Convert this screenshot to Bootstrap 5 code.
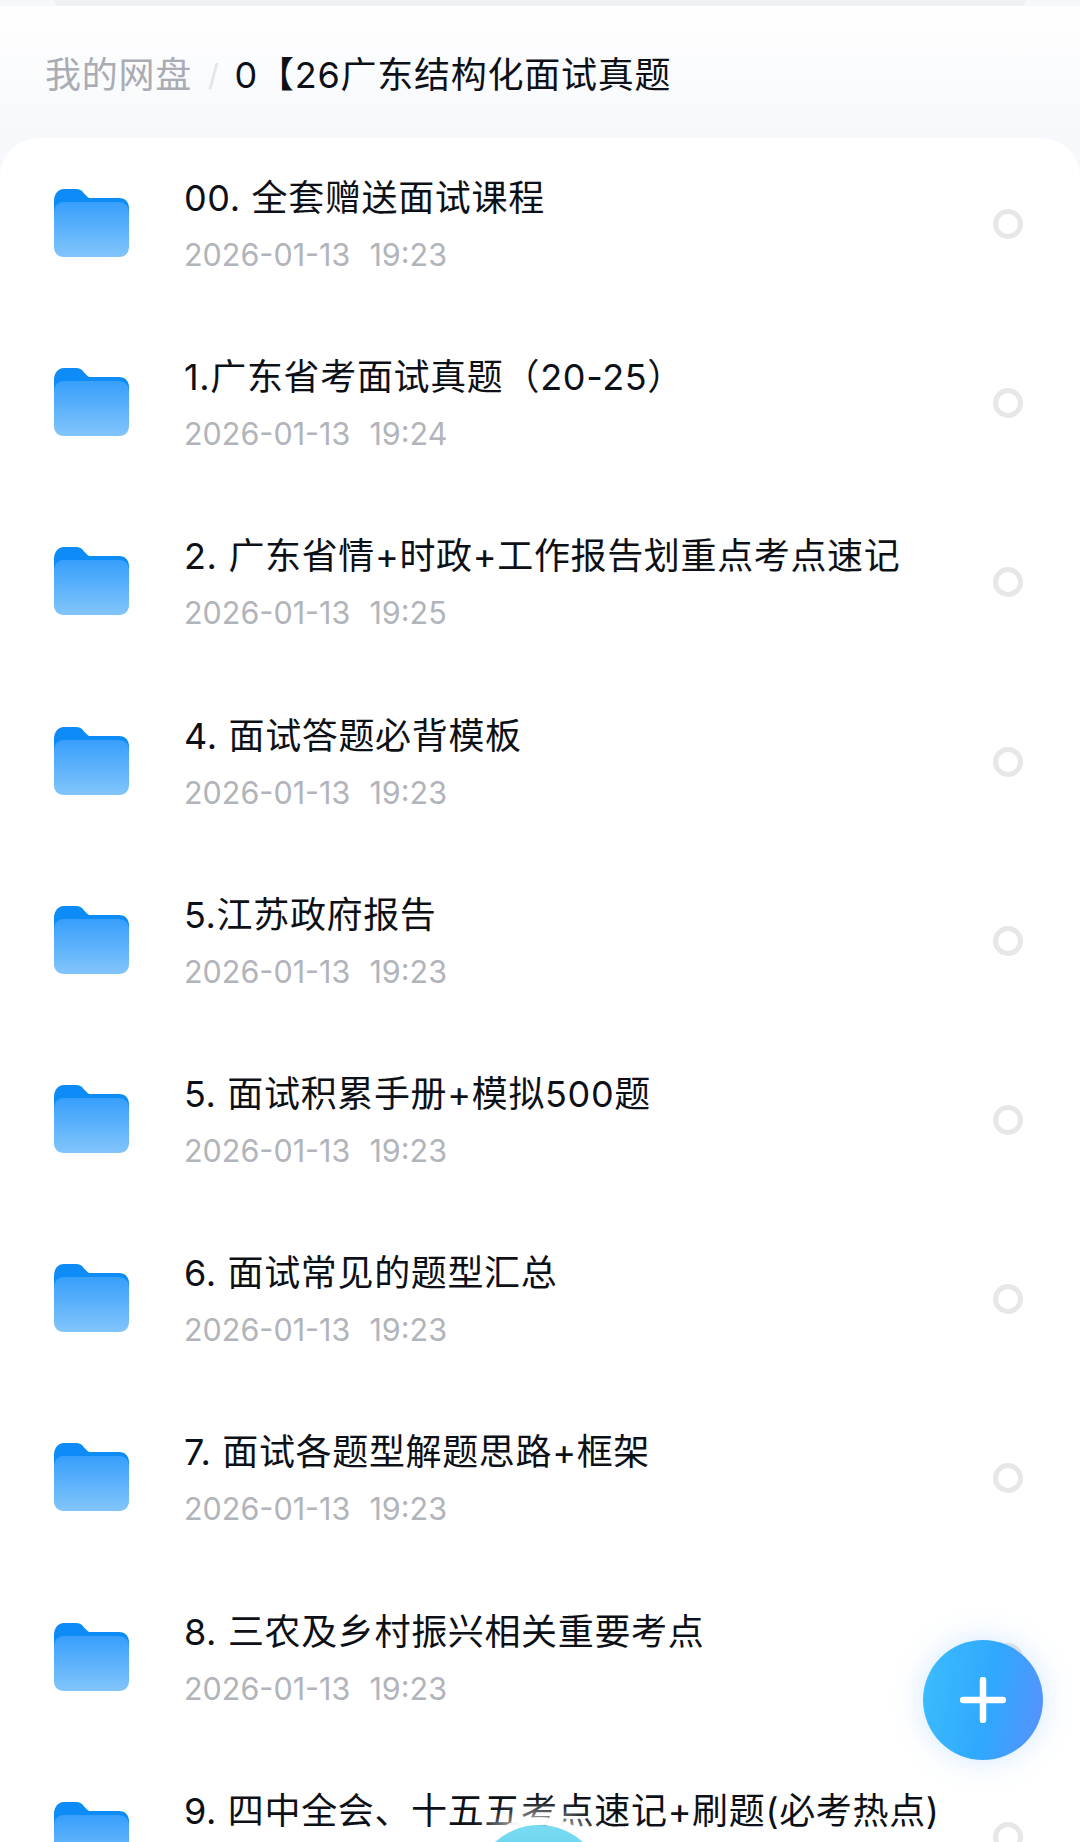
<!DOCTYPE html>
<html lang="zh-CN">
<head>
	<meta charset="UTF-8">
	<meta name="viewport" content="width=device-width, initial-scale=1.0">
	<title>我的网盘</title>
	<link href="https://cdn.jsdelivr.net/npm/bootstrap@5.3.0/dist/css/bootstrap.min.css" rel="stylesheet">
	<style>
        html, body {
            height: 1842px;
            overflow: hidden;
        }
        body {
            position: relative;
            font-family: "Inter", "Noto Sans CJK SC", sans-serif;
            background: #f6f8fb;
        }
        .top-stub {
            height: 6px;
            margin: 0 54px;
            background: #eff1f5;
            border-radius: 0 0 22px 22px;
        }
        .crumb-bar {
            height: 132px;
            padding: 6px 0 0 45px;
            font-size: 36px;
            letter-spacing: .75px;
            background: linear-gradient(#ffffff, #f6f8fb);
        }
        .crumb-root { color: #a9acb3; }
        .crumb-sep { color: #e2e4e9; margin: 0 15px 0 16px; font-size: 30px; }
        .crumb-now { color: #0d1117; }
        .file-panel {
            background: #fff;
            border-radius: 38px 38px 0 0;
            height: 1704px;
            overflow: hidden;
        }
        .file-row {
            height: 179.2px;
            padding: 0 57px 0 54px;
        }
        .file-row:first-of-type { margin-top: -3.6px; }
        .folder-ico { width: 75px; height: 68px; flex: none; margin-right: 55px; margin-bottom: 2px; }
        .file-name {
            font-size: 36px;
            line-height: 50px;
            letter-spacing: .65px;
            color: #0d1117;
            white-space: nowrap;
        }
        .file-date {
            font-size: 30.5px;
            line-height: 40px;
            min-height: 40px;
            margin-top: 12px;
            color: #b1b4ba;
            white-space: pre;
            word-spacing: 1px;
        }
        .pick-ring {
            width: 30px;
            height: 30px;
            border: 5px solid #e7e7e7;
            border-radius: 50%;
            flex: none;
        }
        .fab-add {
            position: absolute;
            left: 923px;
            top: 1640px;
            width: 120px;
            height: 120px;
            border-radius: 50%;
            background: linear-gradient(100deg, #3dbdfe 0%, #2fa8fd 55%, #5a90fb 100%);
            box-shadow: 0 0 30px rgba(90, 170, 255, .28);
        }
        .fab-mid {
            position: absolute;
            left: 474px;
            top: 1825px;
            width: 130px;
            height: 130px;
            border-radius: 50%;
            background: linear-gradient(#78dbf0, #45c4f5);
            box-shadow: 0 0 0 8px rgba(255, 255, 255, .9), 0 0 20px 12px rgba(255, 255, 255, .8);
        }
	</style>
</head>
<body>
<div class="top-stub"></div>
<div class="crumb-bar d-flex align-items-center">
	<span class="crumb-root">我的网盘</span>
	<span class="crumb-sep">/</span>
	<span class="crumb-now">0【26广东结构化面试真题</span>
</div>
<div class="file-panel" id="fileList"></div>

<button class="fab-add btn border-0 p-0 d-flex align-items-center justify-content-center" aria-label="新建">
	<svg width="46" height="46" viewBox="0 0 46 46"><path d="M23 3v40M3 23h40" stroke="#fff" stroke-width="6.5" stroke-linecap="round" fill="none"/></svg>
</button>
<div class="fab-mid"></div>

<script>
	// у последней строки дата уже за краем экрана
	const files = [
		["00. 全套赠送面试课程", "2026-01-13  19:23"],
		["1.广东省考面试真题（20-25）", "2026-01-13  19:24"],
		["2. 广东省情+时政+工作报告划重点考点速记", "2026-01-13  19:25"],
		["4. 面试答题必背模板", "2026-01-13  19:23"],
		["5.江苏政府报告", "2026-01-13  19:23"],
		["5. 面试积累手册+模拟500题", "2026-01-13  19:23"],
		["6. 面试常见的题型汇总", "2026-01-13  19:23"],
		["7. 面试各题型解题思路+框架", "2026-01-13  19:23"],
		["8. 三农及乡村振兴相关重要考点", "2026-01-13  19:23"],
		["9. 四中全会、十五五考点速记+刷题(必考热点)", ""],
	];

	const folderSvg = `<svg class="folder-ico" viewBox="0 0 76 68" preserveAspectRatio="none">
		<path d="M0 12C0 5 4 0 10 0H22C26 0 28 1 30 4L34 8C35 9 36 9 38 9H66C72 9 76 13 76 19V40H0Z" fill="#0d8cf8"/>
		<path d="M0 24C0 17 4 13 10 13H66C72 13 76 17 76 24V58C76 64 72 68 66 68H10C4 68 0 64 0 58Z" fill="url(#folderFill)"/>
	</svg>`;

	document.getElementById("fileList").innerHTML =
		`<svg width="0" height="0" class="position-absolute"><defs><linearGradient id="folderFill" x1="0" y1="0" x2="0" y2="1"><stop offset="0" stop-color="#379ffb"/><stop offset="1" stop-color="#82c5fb"/></linearGradient></defs></svg>` +
		files.map(([name, date]) => `
		<div class="file-row d-flex align-items-center">
			${folderSvg}
			<div class="flex-grow-1">
				<div class="file-name">${name}</div>
				<div class="file-date">${date}</div>
			</div>
			<div class="pick-ring"></div>
		</div>`).join("");
</script>
<script src="https://cdn.jsdelivr.net/npm/bootstrap@5.3.0/dist/js/bootstrap.bundle.min.js"></script>
</body>
</html>
